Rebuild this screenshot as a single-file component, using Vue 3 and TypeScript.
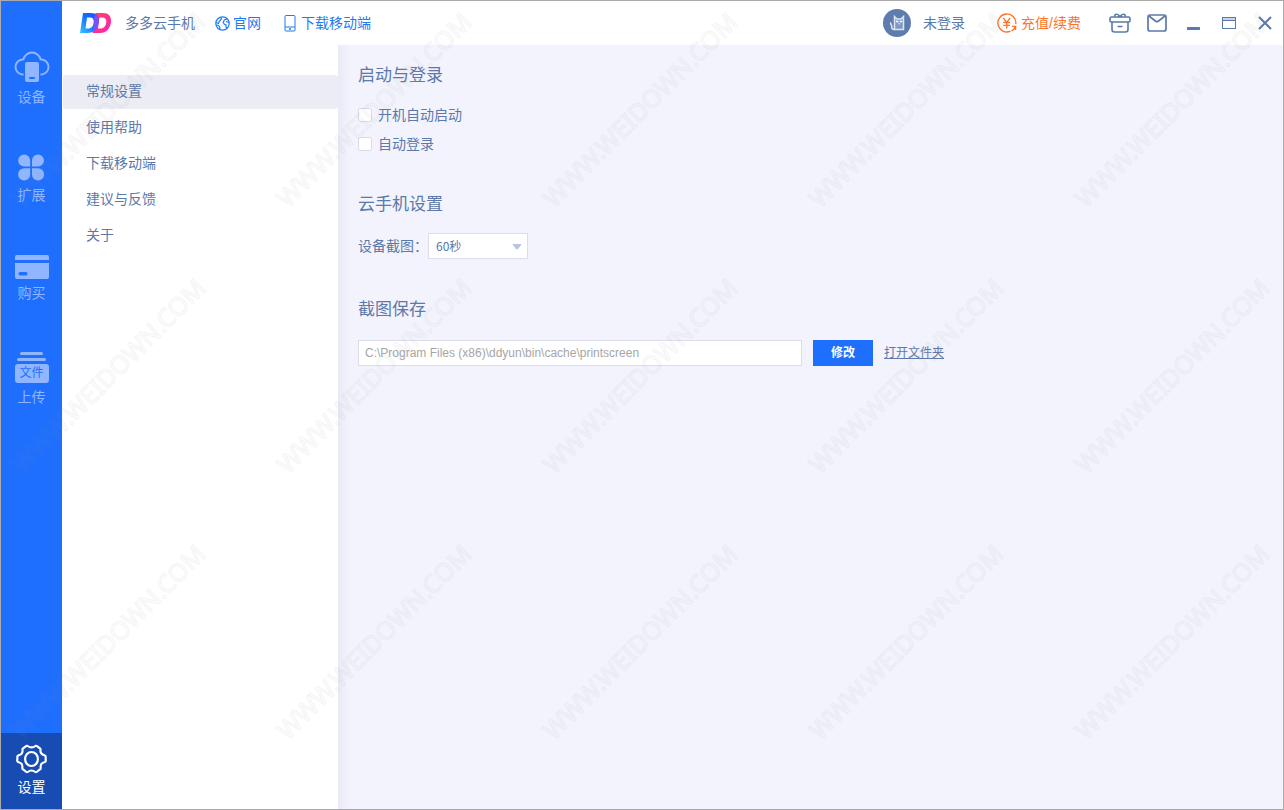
<script setup lang="ts">
import { ref } from 'vue'

interface NavItem {
  id: string
  label: string
}

const navItems: NavItem[] = [
  { id: 'device', label: '设备' },
  { id: 'extend', label: '扩展' },
  { id: 'buy', label: '购买' },
  { id: 'upload', label: '上传' },
]

const menuItems: string[] = ['常规设置', '使用帮助', '下载移动端', '建议与反馈', '关于']
const activeMenu = ref<string>('常规设置')
const autoStart = ref<boolean>(false)
const autoLogin = ref<boolean>(false)
const interval = ref<string>('60')
const savePath = ref<string>('C:\\Program Files (x86)\\ddyun\\bin\\cache\\printscreen')
</script>

<template>
  <div class="window">
    <nav class="sidebar">
      <div class="nav-list">
        <button v-for="item in navItems" :key="item.id" type="button" class="nav-item">
          <svg v-if="item.id === 'device'" width="36" height="32" viewBox="0 0 36 32">
            <path d="M9.500 23.500H8.500A7.600 7.600 0 0 1 8 8.400Q9 8.200 10 8.500M9.300 9A8.800 8.800 0 0 1 26.700 9M26 8.500Q27 8.200 28 8.400A7.600 7.600 0 0 1 27.500 23.500H26.500" fill="none" stroke="#90b6ff" stroke-width="2" />
            <rect x="11" y="11" width="14" height="20" rx="2" fill="#90b6ff" />
            <rect x="15" y="26" width="6" height="2" rx="1" fill="#1f6fff" />
          </svg>
          <svg v-else-if="item.id === 'extend'" width="27" height="27" viewBox="0 0 27 27">
            <g fill="#90b6ff">
              <path d="M6.200 0.500a6 6 0 0 1 6 6V12.500H6.200a6 6 0 0 1 0-12z" />
              <path d="M20 0.500a6 6 0 0 0-6 6V12.500h6a6 6 0 0 0 0-12z" />
              <path d="M6.200 26.500a6 6 0 0 0 6-6V14.300H6.200a6 6 0 0 0 0 12.200z" />
              <path d="M20 26.500a6 6 0 0 1-6-6V14.300h6a6 6 0 0 1 0 12.200z" />
            </g>
          </svg>
          <svg v-else-if="item.id === 'buy'" width="34" height="24" viewBox="0 0 34 24">
            <path d="M2 0h30a2 2 0 0 1 2 2v3H0V2a2 2 0 0 1 2-2z" fill="#90b6ff" />
            <path d="M0 8h34v14a2 2 0 0 1-2 2H2a2 2 0 0 1-2-2z" fill="#90b6ff" />
            <rect x="3.500" y="17" width="9" height="3.500" rx="1.700" fill="#1f6fff" />
          </svg>
          <span v-else class="file-stack">
            <span class="sheet sheet-back"></span>
            <span class="sheet"></span>
            <span class="file-card">文件</span>
          </span>
          <span class="nav-label">{{ item.label }}</span>
        </button>
      </div>
      <button type="button" class="nav-item nav-settings">
        <svg width="33" height="32" viewBox="0 0 34 32" fill="none" stroke="#fff" stroke-width="2.200">
          <path d="M11.700 2.600 Q12.300 2.200 13 2.600 Q17 5.500 21 2.600 Q21.700 2.200 22.300 2.600 L26 5.200 Q26.500 5.600 26.300 6.300 Q25.600 10.900 30.200 12.100 Q31.400 12.400 31.500 13 L31.700 18 Q31.600 18.800 30.800 19.100 Q25.600 20.500 26.500 25 Q26.600 26 26 26.500 L22.300 29.400 Q21.600 29.900 20.900 29.400 Q17 26.300 13.100 29.400 Q12.400 29.900 11.700 29.400 L8 26.500 Q7.400 26 7.500 25 Q8.400 20.500 3.200 19.100 Q2.400 18.800 2.300 18 L2.500 13 Q2.600 12.400 3.800 12.100 Q8.400 10.900 7.700 6.300 Q7.500 5.600 8 5.200z" />
          <ellipse cx="17" cy="16" rx="6.600" ry="7.200" />
        </svg>
        <span class="nav-label">设置</span>
      </button>
    </nav>

    <div class="main">
      <header class="topbar">
        <svg class="logo" width="32" height="20" viewBox="0 0 32 20">
          <defs>
            <linearGradient id="dBlue" x1="0" y1="1" x2="1" y2="0">
              <stop offset="0" stop-color="#38c6ff" />
              <stop offset=".55" stop-color="#136cff" />
              <stop offset="1" stop-color="#1550ff" />
            </linearGradient>
            <linearGradient id="dPink" x1="0" y1="0" x2="1" y2="1">
              <stop offset="0" stop-color="#ff4562" />
              <stop offset="1" stop-color="#ff1fb4" />
            </linearGradient>
          </defs>
          <path fill-rule="evenodd" fill="url(#dPink)" d="M15.500 0H23c5.500 0 8.300 3.200 8 8.300C30.600 15.500 26.500 20 20 20h-7.500zM19.500 4.500L18 15.500h2.500c3.500 0 5.500-2.500 5.800-6.500 .2-3-1.300-4.500-4.300-4.500z" />
          <path fill-rule="evenodd" fill="url(#dBlue)" d="M3 0h8c5.500 0 8 3.200 7.700 8.300C18.300 15.500 14 20 7.500 20H0zM7 4.500L5.500 15.500H8c3.500 0 5.500-2.500 5.800-6.500C14 6 12.700 4.500 9.800 4.500z" />
          <path fill="#7950ff" d="M15.500 1.300c2.300 1.300 3.400 3.700 3.200 7-.2 4.300-1.800 7.700-4.500 9.600L13.800 15.500 12.900 14.500c.6-1.400 .9-3.200 1-5.500 .1-1.400-.2-2.500-.8-3.300z" />
        </svg>
        <span class="app-name">多多云手机</span>
        <a href="#" class="top-link site-link">
          <svg width="15" height="15" viewBox="0 0 15 15" fill="none" stroke="currentColor" stroke-width="1.200">
            <circle cx="7.500" cy="7.500" r="6.700" />
            <path d="M5.500 1.200L6.500 3 4 5.800 3.500 7.500 1 6.500M1 9L3.500 9.500 5 11.500 4.300 13.500M12.500 3L9.300 4 8.200 6.500 9.500 8.500 11 8.700 11 11 12.200 12M11 5.500L13.800 6.500" />
          </svg>
          官网
        </a>
        <a href="#" class="top-link mobile-link">
          <svg width="12" height="17" viewBox="0 0 12 17" fill="none" stroke="currentColor">
            <rect x="1" y=".5" width="10" height="15.500" rx="1" />
            <path d="M1 12h10" />
            <path d="M5 14h2" stroke-width="1.500" />
          </svg>
          下载移动端
        </a>

        <div class="top-right">
          <button type="button" class="plain user">
            <svg width="28" height="28" viewBox="0 0 28 28">
              <circle cx="14" cy="14" r="14" fill="#5f7cae" />
              <path d="M11.500 20.500V7.500L14 10h4l2.500-2.500v13z" fill="#8098c1" stroke="#dde5f3" stroke-width="1.500" />
              <path d="M11.500 20.500Q8.300 20.500 8.800 17.500 8.800 16.300 8 15.500T8 13.300" fill="none" stroke="#dde5f3" stroke-width="1.600" />
              <path d="M13 12.500h2.500M16.800 12.500h2.500" fill="none" stroke="#fff" stroke-width="1.500" />
              <path d="M15.200 14.800h2" fill="none" stroke="#dde5f3" />
            </svg>
            未登录
          </button>
          <a href="#" class="recharge">
            <svg width="20" height="20" viewBox="0 0 20 20" fill="none" stroke="currentColor" stroke-width="1.300">
              <path d="M13.500 18.200A9 9 0 1 1 18.800 11" />
              <path d="M6.300 4.800L9.700 9.300 13.100 4.800M9.700 9.300V15.500M6.300 9.500h6.800M6.300 12.300h6.800" />
              <path d="M15 13.300h3.600V17M18.300 13.500Q17.500 16.500 14.500 17.800" />
            </svg>
            充值/续费
          </a>
          <div class="tools">
            <button type="button" class="plain" aria-label="礼物">
              <svg width="22" height="20" viewBox="0 0 22 20" fill="none" stroke="currentColor" stroke-width="1.600">
                <rect x="1" y="4" width="20" height="5" rx="1.500" />
                <path d="M3 9v7.500a2.500 2.500 0 0 0 2.500 2.500h11a2.500 2.500 0 0 0 2.500-2.500V9M8.500 13.500h5" />
                <path d="M5.500 3.500C5.500 .8 9 .3 11 3.500 13 .3 16.500 .8 16.500 3.500M9 3.800L11 2.800l2 1" stroke-width="1.400" />
              </svg>
            </button>
            <button type="button" class="plain" aria-label="消息">
              <svg width="20" height="18" viewBox="0 0 20 18" fill="none" stroke="currentColor" stroke-width="1.700">
                <rect x="1" y="1" width="18" height="16" rx="2" />
                <path d="M2 2l6.800 5.200a2 2 0 0 0 2.400 0L18 2" />
              </svg>
            </button>
            <button type="button" class="plain" aria-label="最小化">
              <svg width="14" height="14" viewBox="0 0 14 14">
                <rect x="1" y="11" width="13" height="3" rx=".5" fill="currentColor" />
              </svg>
            </button>
            <button type="button" class="plain" aria-label="最大化">
              <svg width="14" height="12" viewBox="0 0 14 12" fill="none" stroke="currentColor">
                <rect x=".5" y=".5" width="13" height="11" fill="#fff" />
                <path d="M1 2h12" stroke="#c7d4ea" stroke-width="2" />
                <path d="M1 3.500h12" />
              </svg>
            </button>
            <button type="button" class="plain" aria-label="关闭">
              <svg width="14" height="14" viewBox="0 0 14 14" fill="none" stroke="currentColor" stroke-width="2">
                <path d="M1 1l12 12M13 1L1 13" />
              </svg>
            </button>
          </div>
        </div>
      </header>

      <div class="body">
        <aside class="menu">
          <button
            v-for="name in menuItems"
            :key="name"
            type="button"
            class="menu-item"
            :class="{ active: name === activeMenu }"
            @click="activeMenu = name"
          >
            {{ name }}
          </button>
        </aside>

        <main class="content">
          <section class="login-section">
            <h2>启动与登录</h2>
            <label class="check"><input v-model="autoStart" type="checkbox" />开机自动启动</label>
            <label class="check"><input v-model="autoLogin" type="checkbox" />自动登录</label>
          </section>

          <section class="phone-section">
            <h2>云手机设置</h2>
            <div class="row">
              <label for="interval">设备截图：</label>
              <div class="select-box">
                <select id="interval" v-model="interval">
                  <option value="60">60秒</option>
                </select>
                <svg class="arrow" width="10" height="6" viewBox="0 0 10 6">
                  <path d="M1 .5h8L5.500 5h-1z" fill="#b9c4e0" stroke="#b9c4e0" stroke-linejoin="round" />
                </svg>
              </div>
            </div>
          </section>

          <section>
            <h2 id="save-title">截图保存</h2>
            <div class="row">
              <input v-model="savePath" type="text" class="path" aria-labelledby="save-title" />
              <button type="button" class="modify">修改</button>
              <a href="#" class="open">打开文件夹</a>
            </div>
          </section>
        </main>
      </div>
    </div>

    <svg class="watermark" aria-hidden="true">
      <defs>
        <pattern id="mark" x="6" y="5" width="266" height="266" patternUnits="userSpaceOnUse">
          <text class="mark-text" transform="translate(15 203) rotate(-45)">WWW.WEIDOWN.COM</text>
        </pattern>
      </defs>
      <rect width="100%" height="100%" fill="url(#mark)" />
    </svg>
  </div>
</template>

<style>
html,
body,
#app {
  height: 100%;
}
body {
  margin: 0;
}
</style>

<style scoped>
* {
  box-sizing: border-box;
}
.window {
  position: relative;
  display: flex;
  min-height: 100%;
  border: 1px solid #aaa;
  background: #fff;
  color: #5b79aa;
  font-family: "Liberation Sans", "Noto Sans CJK SC", sans-serif;
  font-size: 14px;
  line-height: 20px;
}
button,
input,
select {
  font: inherit;
  color: inherit;
  margin: 0;
}
a {
  color: inherit;
  text-decoration: none;
}
svg {
  display: block;
  flex: none;
}
.sidebar {
  display: flex;
  flex: 0 0 61px;
  flex-direction: column;
  justify-content: space-between;
  background: #1f6fff;
}
.nav-list {
  display: flex;
  flex-direction: column;
  padding-top: 28px;
}
.nav-item {
  display: flex;
  flex-direction: column;
  align-items: center;
  justify-content: center;
  gap: 4px;
  width: 100%;
  height: 100px;
  padding: 0;
  border: 0;
  background: none;
  color: #90b6ff;
}
.nav-settings {
  gap: 2px;
  height: 76px;
  padding-bottom: 2px;
  background: #174db3;
  color: #fff;
}
.file-stack {
  display: flex;
  flex-direction: column;
  align-items: center;
  gap: 3px;
}
.sheet {
  width: 29px;
  height: 3px;
  border-radius: 2px;
  background: #90b6ff;
}
.sheet-back {
  width: 23px;
}
.file-card {
  width: 34px;
  height: 19px;
  border-radius: 3px;
  background: #90b6ff;
  color: #1f6fff;
  font-size: 12px;
  line-height: 19px;
}
.main {
  display: flex;
  flex: 1;
  flex-direction: column;
  min-width: 0;
}
.topbar {
  display: flex;
  align-items: center;
  height: 44px;
  padding: 0 11px 0 18px;
  white-space: nowrap;
}
.app-name {
  margin-left: 13px;
}
.top-link {
  display: flex;
  align-items: center;
  gap: 3px;
  color: #1f7bf5;
}
.site-link {
  margin-left: 20px;
}
.mobile-link {
  gap: 5px;
  margin-left: 23px;
}
.plain {
  display: flex;
  align-items: center;
  padding: 0;
  border: 0;
  background: none;
}
.top-right {
  display: flex;
  align-items: center;
  margin-left: auto;
}
.user {
  gap: 12px;
}
.recharge {
  display: flex;
  align-items: center;
  gap: 4px;
  margin-left: 32px;
  color: #ff7425;
}
.tools {
  display: flex;
  align-items: center;
  gap: 22px;
  margin-left: 28px;
}
.tools button:nth-child(-n + 2) {
  margin-right: -6px;
}
.tools button:nth-child(2) {
  margin-right: -3px;
}
.body {
  display: flex;
  flex: 1;
}
.menu {
  display: flex;
  flex: 0 0 276px;
  flex-direction: column;
  gap: 2px;
  padding: 30px 0 0 1px;
}
.menu-item {
  height: 34px;
  padding: 0 23px 2px;
  border: 0;
  border-radius: 3px;
  background: none;
  text-align: left;
}
.menu-item.active {
  background: #ececf5;
}
.content {
  display: flex;
  flex: 1;
  flex-direction: column;
  gap: 39px;
  min-width: 0;
  padding: 19px 20px;
  background: linear-gradient(90deg, #eaeaf7, #f3f3fd 12px);
}
.login-section {
  display: flex;
  flex-direction: column;
  gap: 9px;
}
h2 {
  margin: 0 0 18px;
  font-size: 17px;
  font-weight: 400;
  line-height: 24px;
}
.login-section h2 {
  margin-bottom: 8px;
}
.phone-section h2 {
  margin-bottom: 16px;
}
.check {
  display: flex;
  align-items: center;
  align-self: flex-start;
  gap: 6px;
}
.check input {
  width: 14px;
  height: 14px;
  border: 1px solid #d5dcec;
  border-radius: 2px;
  background: #fff;
  appearance: none;
}
.check input:checked {
  background: #1f6fff;
}
.row {
  display: flex;
  align-items: center;
}
.select-box {
  position: relative;
  width: 100px;
}
select {
  display: block;
  width: 100%;
  height: 26px;
  padding: 0 20px 0 7px;
  border: 1px solid #dcdcec;
  border-radius: 0;
  background: #fff;
  font-family: "Noto Sans CJK SC", sans-serif;
  font-size: 12px;
  appearance: none;
}
.arrow {
  position: absolute;
  top: 11px;
  right: 6px;
  pointer-events: none;
}
.path {
  flex: 0 1 444px;
  min-width: 0;
  height: 26px;
  padding: 0 6px;
  border: 1px solid #dcdcec;
  background: #fff;
  color: #a6a6a6;
  font-size: 12px;
}
.modify {
  width: 60px;
  height: 26px;
  margin: 0 11px;
  padding: 0;
  border: 0;
  background: #1f6fff;
  color: #fff;
  font-size: 12px;
  font-weight: 700;
}
.open {
  font-size: 12px;
  text-decoration: underline;
  white-space: nowrap;
}
.watermark {
  position: absolute;
  inset: 0;
  width: 100%;
  height: 100%;
  pointer-events: none;
}
.mark-text {
  fill: none;
  stroke: #808080;
  stroke-opacity: 0.07;
  stroke-width: 1.5px;
  font-family: "Noto Sans", sans-serif;
  font-size: 25px;
}
</style>
